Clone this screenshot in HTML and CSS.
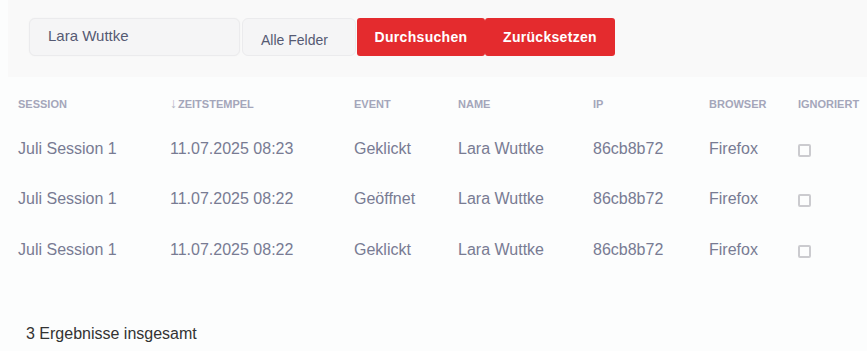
FILE: index.html
```html
<!DOCTYPE html>
<html lang="de">
<head>
<meta charset="UTF-8">
<meta name="viewport" content="width=device-width, initial-scale=1.0">
<title>Protokoll</title>
<link rel="stylesheet" href="styles.css">
</head>
<body>
<div class="suche">
    <input type="text" class="suchfeld" value="Lara Wuttke">
    <div class="auswahl">Alle Felder</div>
    <button type="button" class="knopf">Durchsuchen</button>
    <button type="button" class="knopf">Zurücksetzen</button>
</div>

<table class="liste">
    <colgroup>
        <col style="width: 152px">
        <col style="width: 184px">
        <col style="width: 104px">
        <col style="width: 135px">
        <col style="width: 116px">
        <col style="width: 89px">
        <col>
    </colgroup>
    <thead>
        <tr>
            <th>Session</th>
            <th><span class="pfeil">&darr;</span>Zeitstempel</th>
            <th>Event</th>
            <th>Name</th>
            <th>IP</th>
            <th>Browser</th>
            <th>Ignoriert</th>
        </tr>
    </thead>
    <tbody>
        <tr>
            <td>Juli Session 1</td>
            <td>11.07.2025 08:23</td>
            <td>Geklickt</td>
            <td>Lara Wuttke</td>
            <td>86cb8b72</td>
            <td>Firefox</td>
            <td><span class="haken"></span></td>
        </tr>
        <tr>
            <td>Juli Session 1</td>
            <td>11.07.2025 08:22</td>
            <td>Geöffnet</td>
            <td>Lara Wuttke</td>
            <td>86cb8b72</td>
            <td>Firefox</td>
            <td><span class="haken"></span></td>
        </tr>
        <tr>
            <td>Juli Session 1</td>
            <td>11.07.2025 08:22</td>
            <td>Geklickt</td>
            <td>Lara Wuttke</td>
            <td>86cb8b72</td>
            <td>Firefox</td>
            <td><span class="haken"></span></td>
        </tr>
    </tbody>
</table>

<div class="summe">3 Ergebnisse insgesamt</div>
</body>
</html>
```

FILE: styles.css
```css
body {
    margin: 0 0 0 8px;
    font-family: "Liberation Sans", Arial, sans-serif;
    background-color: #fcfdfd;
}

.suche {
    display: flex;
    align-items: stretch;
    padding: 18px 0 21px 21px;
    background-color: #f9f9f9;
}

.suchfeld {
    box-sizing: border-box;
    width: 211px;
    height: 38px;
    margin: 0 2px 0 0;
    padding: 0 0 4px 18px;
    font-family: inherit;
    font-size: 15px;
    color: #555a73;
    background-color: #f5f5f6;
    border: 1px solid #ebebed;
    border-radius: 6px;
    box-shadow: 0 0 2px rgba(0, 0, 0, 0.04);
    outline: none;
}

.auswahl {
    box-sizing: border-box;
    width: 114px;
    height: 38px;
    margin-right: 1px;
    padding: 13px 0 0 18px;
    font-size: 14px;
    color: #555a73;
    background-color: #f5f5f6;
    border: 1px solid #ebebed;
    border-radius: 6px;
}

.knopf {
    height: 38px;
    width: 128px;
    padding: 0;
    font-family: inherit;
    font-size: 14px;
    font-weight: bold;
    letter-spacing: 0.3px;
    color: #ffffff;
    background-color: #e42b2e;
    border: none;
    border-radius: 3px;
    cursor: pointer;
}

.knopf + .knopf {
    width: 130px;
}

.liste {
    width: 859px;
    table-layout: fixed;
    border-collapse: collapse;
}

.liste th {
    padding: 20px 0 13px 10px;
    font-size: 11px;
    line-height: 13px;
    font-weight: bold;
    text-align: left;
    text-transform: uppercase;
    color: #a4a6ba;
    white-space: nowrap;
}

.pfeil {
    font-size: 14px;
    font-weight: normal;
    color: #b3b5c6;
    margin-right: 1px;
}

.liste td {
    height: 50px;
    padding: 0 0 0 10px;
    font-size: 16px;
    color: #787b93;
    vertical-align: middle;
}

.liste tbody tr:last-child td {
    height: 51px;
}

.haken {
    display: block;
    box-sizing: border-box;
    width: 13px;
    height: 13px;
    margin: 3px 0 0 0;
    border: 2px solid #cbcbcf;
    border-radius: 2px;
}

.summe {
    padding: 50px 0 0 18px;
    font-size: 16px;
    color: #333333;
}
```
